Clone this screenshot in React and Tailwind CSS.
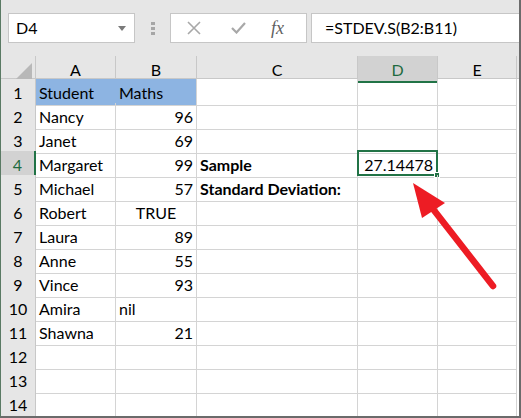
import React from "react";

const font = { fontFamily: "Lato, 'Liberation Sans', sans-serif" };

const rows = [
  ["Student", "Maths", "", ""],
  ["Nancy", "96", "", ""],
  ["Janet", "69", "", ""],
  ["Margaret", "99", "Sample", "27.14478"],
  ["Michael", "57", "Standard Deviation:", ""],
  ["Robert", "TRUE", "", ""],
  ["Laura", "89", "", ""],
  ["Anne", "55", "", ""],
  ["Vince", "93", "", ""],
  ["Amira", "nil", "", ""],
  ["Shawna", "21", "", ""],
  ["", "", "", ""],
  ["", "", "", ""],
  ["", "", "", ""],
  ["", "", "", ""],
];

function bAlign(v) {
  if (v === "TRUE") return "justify-center";
  if (/^[0-9.]+$/.test(v)) return "justify-end pr-[3px]";
  return "justify-start pl-[3px]";
}

export default function App() {
  return (
    <div
      className="relative w-[521px] h-[418px] overflow-hidden bg-white border-l border-l-[#5a7a64] border-r-2 border-r-[#6b6b6b] border-b-2 border-b-[#6b6b6b] text-black"
      style={font}
    >
      {/* toolbar */}
      <div className="h-[56px] bg-[#e6e6e6] flex items-center">
        <div className="ml-[7px] w-[127px] h-[30px] bg-white border border-[#c6c6c6] flex items-center justify-between pl-[7px] pr-[8px]">
          <span className="text-[16px] leading-none">D4</span>
          <svg width="8" height="5" viewBox="0 0 8 5">
            <polygon points="0,0 8,0 4,5" fill="#7a7a7a" />
          </svg>
        </div>
        <div className="ml-[16px] flex flex-col gap-[2px]">
          <div className="w-[4px] h-[3px] bg-[#a6a6a6]" />
          <div className="w-[4px] h-[3px] bg-[#a6a6a6]" />
          <div className="w-[4px] h-[3px] bg-[#a6a6a6]" />
        </div>
        <div className="ml-[15px] w-[137px] h-[30px] bg-white border border-[#c6c6c6] flex items-center">
          <svg className="ml-[16px]" width="14" height="14" viewBox="0 0 14 14">
            <path d="M1 1 L13 13 M13 1 L1 13" stroke="#a8a8a8" strokeWidth="1.6" fill="none" />
          </svg>
          <svg className="ml-[30px]" width="15" height="12" viewBox="0 0 15 12">
            <path d="M1 6 L5.5 10.5 L14 1" stroke="#a8a8a8" strokeWidth="2.2" fill="none" />
          </svg>
          <span
            className="ml-[25px] text-[18px] italic leading-none text-[#606060]"
            style={{ fontFamily: "'Liberation Serif', serif" }}
          >
            fx
          </span>
        </div>
        <div className="ml-[4px] flex-1 h-[30px] bg-white border border-[#c6c6c6] border-r-0 flex items-center pl-[13px]">
          <span className="text-[16px] leading-none">=STDEV.S(B2:B11)</span>
        </div>
      </div>

      {/* header row */}
      <div className="grid grid-cols-[35px_80px_81px_161px_80px_79px_1fr] h-[23px] bg-[#e6e6e6] border-b border-[#c8c8c8] text-[16px]">
        <div className="relative border-r border-[#c8c8c8]">
          <svg className="absolute right-[3px] bottom-[3px]" width="16" height="16" viewBox="0 0 16 16">
            <polygon points="16,0 16,16 0,16" fill="#b8b8b8" />
          </svg>
        </div>
        <div className="border-r border-[#c8c8c8] flex items-center justify-center pt-[2px]">A</div>
        <div className="border-r border-[#c8c8c8] flex items-center justify-center pt-[2px]">B</div>
        <div className="border-r border-[#c8c8c8] flex items-center justify-center pt-[2px]">C</div>
        <div className="relative border-r border-[#c8c8c8] bg-[#d2d2d2] flex items-center justify-center pt-[2px] text-[#1e6b3f]">
          D
          <div className="absolute left-0 right-0 -bottom-[1px] h-[2px] bg-[#217346]" />
        </div>
        <div className="border-r border-[#c8c8c8] flex items-center justify-center pt-[2px]">E</div>
        <div />
      </div>

      {/* body rows */}
      {rows.map((r, i) => {
        const n = i + 1;
        const sel = n === 4;
        const blue = n === 1;
        return (
          <div
            key={n}
            className="grid grid-cols-[35px_80px_81px_161px_80px_79px_1fr] h-[24px] text-[16px]"
          >
            <div
              className={
                "relative flex items-center justify-center pt-[2px] border-b border-[#c8c8c8] " +
                (sel
                  ? "bg-[#d2d2d2] text-[#1e6b3f] border-r-2 border-r-[#217346]"
                  : "bg-[#e6e6e6] border-r border-r-[#c8c8c8]")
              }
            >
              {n < 15 ? n : ""}
            </div>
            <div
              className={
                "flex items-center pt-[2px] pl-[3px] border-b border-r whitespace-nowrap " +
                (blue ? "bg-[#8db4e2] border-[#d4d4d4] border-r-[#8db4e2]" : "border-[#d4d4d4]")
              }
            >
              {r[0]}
            </div>
            <div
              className={
                "flex items-center pt-[2px] border-b border-r border-[#d4d4d4] whitespace-nowrap " +
                (blue ? "bg-[#8db4e2] justify-start pl-[3px]" : bAlign(r[1]))
              }
            >
              {r[1]}
            </div>
            <div className="flex items-center pt-[2px] pl-[3px] border-b border-r border-[#d4d4d4] font-bold whitespace-nowrap">
              {r[2]}
            </div>
            <div className="relative flex items-center justify-end pt-[2px] pr-[4px] border-b border-r border-[#d4d4d4]">
              {r[3]}
              {sel && (
                <div className="absolute -left-[1px] -top-[1px] w-[81px] h-[26px] border-2 border-[#217346]">
                  <div className="absolute -right-[4px] -bottom-[4px] w-[6px] h-[6px] bg-[#217346] border border-white" />
                </div>
              )}
            </div>
            <div className="border-b border-r border-[#d4d4d4]" />
            <div />
          </div>
        );
      })}

      {/* red arrow */}
      <svg className="absolute left-0 top-0 pointer-events-none" width="521" height="418" viewBox="0 0 521 418">
        <line x1="432" y1="209" x2="492" y2="286" stroke="#ed1c24" strokeWidth="6.5" strokeLinecap="round" />
        <polygon points="412,183 444,203 421,218" fill="#ed1c24" />
      </svg>
    </div>
  );
}
